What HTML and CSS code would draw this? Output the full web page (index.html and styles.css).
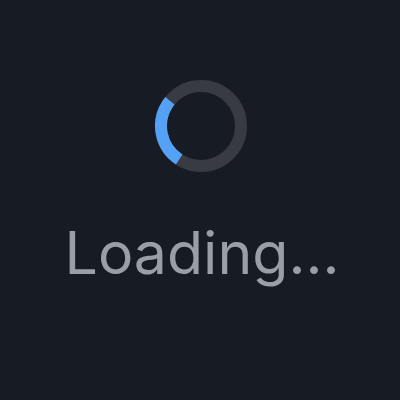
FILE: index.html
```html
<!DOCTYPE html>
<html lang="en">
<head>
    <meta charset="UTF-8">
    <title>Loading</title>
    <link rel="stylesheet" href="styles.css">
</head>
<body>
    <div class="loader">
        <svg class="spinner" width="94" height="94" viewBox="0 0 94 94">
            <circle class="track" cx="47" cy="47" r="40"></circle>
            <circle class="arc" cx="47" cy="47" r="40"></circle>
        </svg>
        <p class="label">Loading...</p>
    </div>
</body>
</html>
```

FILE: styles.css
```css
body {
    margin: 0;
    padding: 0;
    background-color: #171b24;
    font-family: Inter, "Liberation Sans", sans-serif;
}

.loader {
    height: 400px;
    display: flex;
    flex-direction: column;
    align-items: center;
    padding-top: 79px;
    box-sizing: border-box;
}

.spinner {
    margin-left: 2px;
}

.track {
    fill: none;
    stroke: #383b42;
    stroke-width: 12;
}

.arc {
    fill: none;
    stroke: #55a1f5;
    stroke-width: 12;
    stroke-dasharray: 67 300;
    transform: rotate(123deg);
    transform-origin: 47px 47px;
}

.label {
    margin: 44px 0 0 4px;
    font-size: 59px;
    color: #9a9ea6;
    letter-spacing: 0;
}
```
